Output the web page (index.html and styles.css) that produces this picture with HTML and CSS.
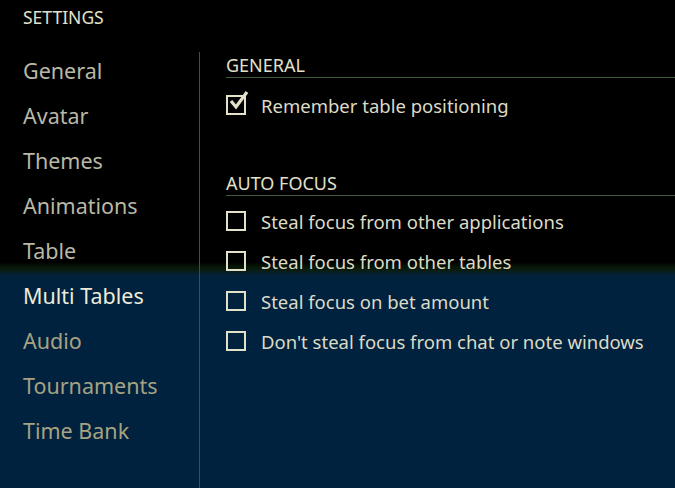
FILE: index.html
```html
<!DOCTYPE html>
<html>
<head>
<meta charset="utf-8">
<link rel="stylesheet" href="styles.css">
</head>
<body>
<div class="app">
  <div class="title">SETTINGS</div>
  <div class="main">
    <nav class="sidebar">
      <div class="item">General</div>
      <div class="item">Avatar</div>
      <div class="item">Themes</div>
      <div class="item">Animations</div>
      <div class="item">Table</div>
      <div class="item active">Multi Tables</div>
      <div class="item dim">Audio</div>
      <div class="item dim">Tournaments</div>
      <div class="item dim">Time Bank</div>
    </nav>
    <section class="content">
      <div class="group">
        <div class="group-title">GENERAL</div>
        <div class="option"><span class="box checked"><svg width="24" height="24" viewBox="0 0 24 24"><path d="M5 11 L10 17 L21 2" fill="none" stroke="#e3e2c9" stroke-width="3.2" stroke-linejoin="miter"/></svg></span>Remember table positioning</div>
      </div>
      <div class="group second">
        <div class="group-title">AUTO FOCUS</div>
        <div class="option"><span class="box"></span>Steal focus from other applications</div>
        <div class="option"><span class="box"></span>Steal focus from other tables</div>
        <div class="option"><span class="box"></span>Steal focus on bet amount</div>
        <div class="option"><span class="box"></span>Don't steal focus from chat or note windows</div>
      </div>
    </section>
  </div>
</div>
</body>
</html>
```
FILE: styles.css
```css
html, body {
  margin: 0;
  padding: 0;
  height: 100%;
}
body {
  font-family: "Noto Sans", "Open Sans", sans-serif;
  background: linear-gradient(to bottom, #000 0, #000 262px, #061306 266px, #0a1c10 270px, #03213a 275px, #00223f 280px, #00223f 100%);
  color: #d9d8c2;
  overflow: hidden;
}
.app {
  height: 488px;
  display: flex;
  flex-direction: column;
}
.title {
  padding: 5px 0 0 23px;
  font-size: 17.5px;
  line-height: 24px;
  height: 46px;
  box-sizing: border-box;
  color: #e2e1cc;
}
.main {
  flex: 1;
  display: flex;
  padding-top: 6px;
}
.sidebar {
  width: 199px;
  border-right: 1px solid #3b5539;
}
.item {
  padding-left: 23px;
  font-size: 21.5px;
  line-height: 45px;
  height: 45px;
  margin-top: -4px;
  margin-bottom: 4px;
  color: #b9b8a6;
}
.item.active {
  color: #ecebd9;
}
.item.dim {
  color: #a6a282;
}
.content {
  flex: 1;
  padding-left: 26px;
}
.group-title {
  font-size: 18px;
  line-height: 20px;
  padding-top: 3px;
  padding-bottom: 2px;
  border-bottom: 1px solid #3d5a3a;
  color: #e2e1cc;
}
.group.second {
  margin-top: 45px;
}
.option {
  display: flex;
  align-items: center;
  height: 40px;
  font-size: 18.5px;
  color: #dcdbc6;
}
.group .group-title + .option {
  margin-top: 7px;
}
.group.second .group-title + .option {
  margin-top: 5px;
}
.box {
  width: 16px;
  height: 16px;
  border: 2px solid #e3e2c9;
  margin-right: 15px;
  flex: none;
  position: relative;
}
.box svg {
  position: absolute;
  left: -2px;
  top: -7px;
}
```
